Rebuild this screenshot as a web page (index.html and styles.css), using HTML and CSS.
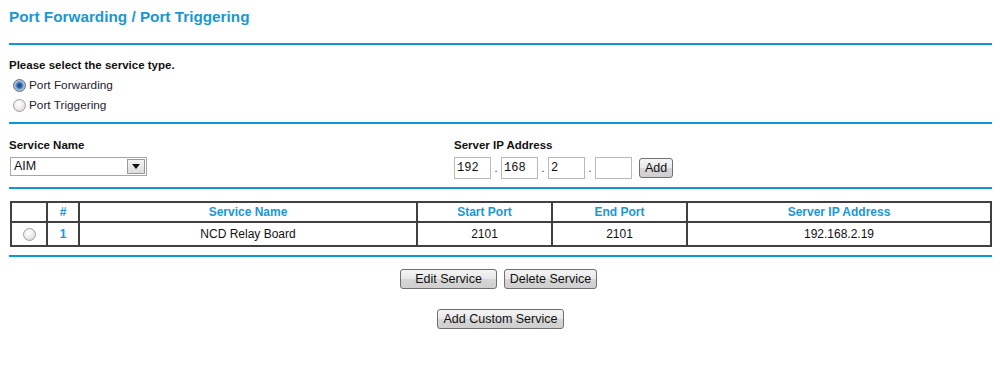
FILE: index.html
```html
<!DOCTYPE html>
<html>
<head>
<meta charset="utf-8">
<link rel="stylesheet" href="styles.css">
</head>
<body>
<div class="page">
  <h1 class="title">Port Forwarding / Port Triggering</h1>
  <div class="rule rule-top"></div>
  <div class="section type-section">
    <div class="label">Please select the service type.</div>
    <label class="radio-row"><span class="radio checked"></span>Port Forwarding</label>
    <label class="radio-row"><span class="radio"></span>Port Triggering</label>
  </div>
  <div class="rule"></div>
  <div class="service-row">
    <div class="service-col">
      <div class="label">Service Name</div>
      <div class="select"><span class="select-text">AIM</span><span class="select-btn"><span class="arrow"></span></span></div>
    </div>
    <div class="ip-col">
      <div class="label">Server IP Address</div>
      <div class="ip-inputs">
        <span class="ip-box">192</span><span class="dot">.</span>
        <span class="ip-box">168</span><span class="dot">.</span>
        <span class="ip-box">2</span><span class="dot">.</span>
        <span class="ip-box"></span>
        <span class="btn add-btn">Add</span>
      </div>
    </div>
  </div>
  <div class="rule"></div>
  <table class="svc-table">
    <colgroup>
      <col class="c-radio"><col class="c-num"><col class="c-name"><col class="c-start"><col class="c-end"><col class="c-ip">
    </colgroup>
    <thead>
      <tr class="head">
        <th></th><th>#</th><th>Service Name</th><th>Start Port</th><th>End Port</th><th>Server IP Address</th>
      </tr>
    </thead>
    <tbody>
      <tr class="data">
        <td><span class="radio"></span></td><td class="num">1</td><td>NCD Relay Board</td><td>2101</td><td>2101</td><td>192.168.2.19</td>
      </tr>
    </tbody>
  </table>
  <div class="rule rule-bottom"></div>
  <div class="btn-row first"><span class="btn edit-btn">Edit Service</span><span class="btn del-btn">Delete Service</span></div>
  <div class="btn-row second"><span class="btn custom-btn">Add Custom Service</span></div>
</div>
</body>
</html>
```
FILE: styles.css
```css
html, body { margin: 0; padding: 0; background: #fff; }
body { font-family: "Liberation Sans", Arial, sans-serif; font-size: 12px; color: #1a1a1a; }
.page { width: 983px; padding: 7px 0 0 9px; }
.title { margin: 0; font-size: 15.3px; font-weight: bold; color: #1b97d2; line-height: 19px; height: 19px; }
.rule { height: 2px; background: #0d97d4; width: 983px; }
.rule-top { margin-top: 17px; }
.type-section { padding-top: 13px; padding-bottom: 7px; }
.label { font-weight: bold; font-size: 11.5px; line-height: 14px; color: #111; }
.radio-row { display: flex; align-items: center; height: 20px; color: #2a1a30; margin-left: 4px; font-size: 11.8px; }
.type-section .label { margin-bottom: 3px; }
.radio { display: inline-block; width: 13px; height: 13px; border-radius: 50%; border: 1px solid #a0a0a0; background: radial-gradient(circle at 40% 35%, #ffffff 0%, #ececec 50%, #c8c8c8 100%); margin-right: 3px; box-sizing: border-box; flex: none; }
.radio.checked { border-color: #5a6e86; background: radial-gradient(circle at 50% 50%, #0f3f7c 0%, #2c69b0 30%, #9cb5d2 55%, #e2e8ef 100%); }
.service-row { display: flex; padding-top: 14px; height: 63px; box-sizing: border-box; }
.service-col { width: 445px; }
.service-row .label { margin-bottom: 5px; }
.select { display: flex; width: 137px; height: 19px; border: 1px solid #a6a6a6; box-sizing: border-box; margin-left: 1px; background: #fff; }
.select-text { flex: 1; padding-left: 3px; line-height: 17px; font-size: 12.5px; color: #111; }
.select-btn { width: 18px; height: 15px; margin: 1px 1px 1px 0; border: 1px solid #9a9a9a; box-sizing: border-box; background: linear-gradient(#f4f4f4, #dcdcdc); display: flex; align-items: center; justify-content: center; }
.arrow { width: 0; height: 0; border-left: 4px solid transparent; border-right: 4px solid transparent; border-top: 5px solid #111; }
.ip-inputs { display: flex; align-items: center; height: 22px; }
.ip-box { width: 37px; height: 22px; border: 1px solid #b9b9b9; box-sizing: border-box; font-family: "Liberation Mono", "Courier New", monospace; font-size: 12px; line-height: 20px; padding-left: 2px; color: #111; }
.dot { width: 10px; text-align: center; font-size: 11px; line-height: 26px; color: #333; }
.btn { display: inline-flex; align-items: center; justify-content: center; height: 20px; box-sizing: border-box; border: 1px solid #707070; border-radius: 3px; background: linear-gradient(#f4f4f4 0%, #e8e8e8 50%, #d6d6d6 51%, #cfcfcf 100%); font-size: 12.5px; color: #111; }
.add-btn { width: 34px; margin-left: 7px; height: 20px; }
.svc-table { border-collapse: collapse; margin-top: 12px; margin-left: 1px; width: 982px; table-layout: fixed; }
.svc-table th, .svc-table td { border: 2px solid #404040; text-align: center; padding: 0; font-size: 12px; }
.svc-table th { color: #1b97d2; font-weight: bold; height: 18px; }
.svc-table td { height: 22px; color: #111; }
.svc-table td.num { color: #1b97d2; font-weight: bold; }
.c-radio { width: 36px; } .c-num { width: 32px; } .c-name { width: 338px; } .c-start { width: 135px; } .c-end { width: 135px; }
.svc-table td .radio { margin: 0; vertical-align: middle; }
.rule-bottom { margin-top: 8px; }
.btn-row { display: flex; justify-content: center; gap: 7px; width: 983px; box-sizing: border-box; }
.btn-row.first { margin-top: 12px; padding-right: 4px; }
.btn-row.second { margin-top: 20px; }
.edit-btn { width: 97px; }
.del-btn { width: 93px; }
.custom-btn { width: 127px; }
```
